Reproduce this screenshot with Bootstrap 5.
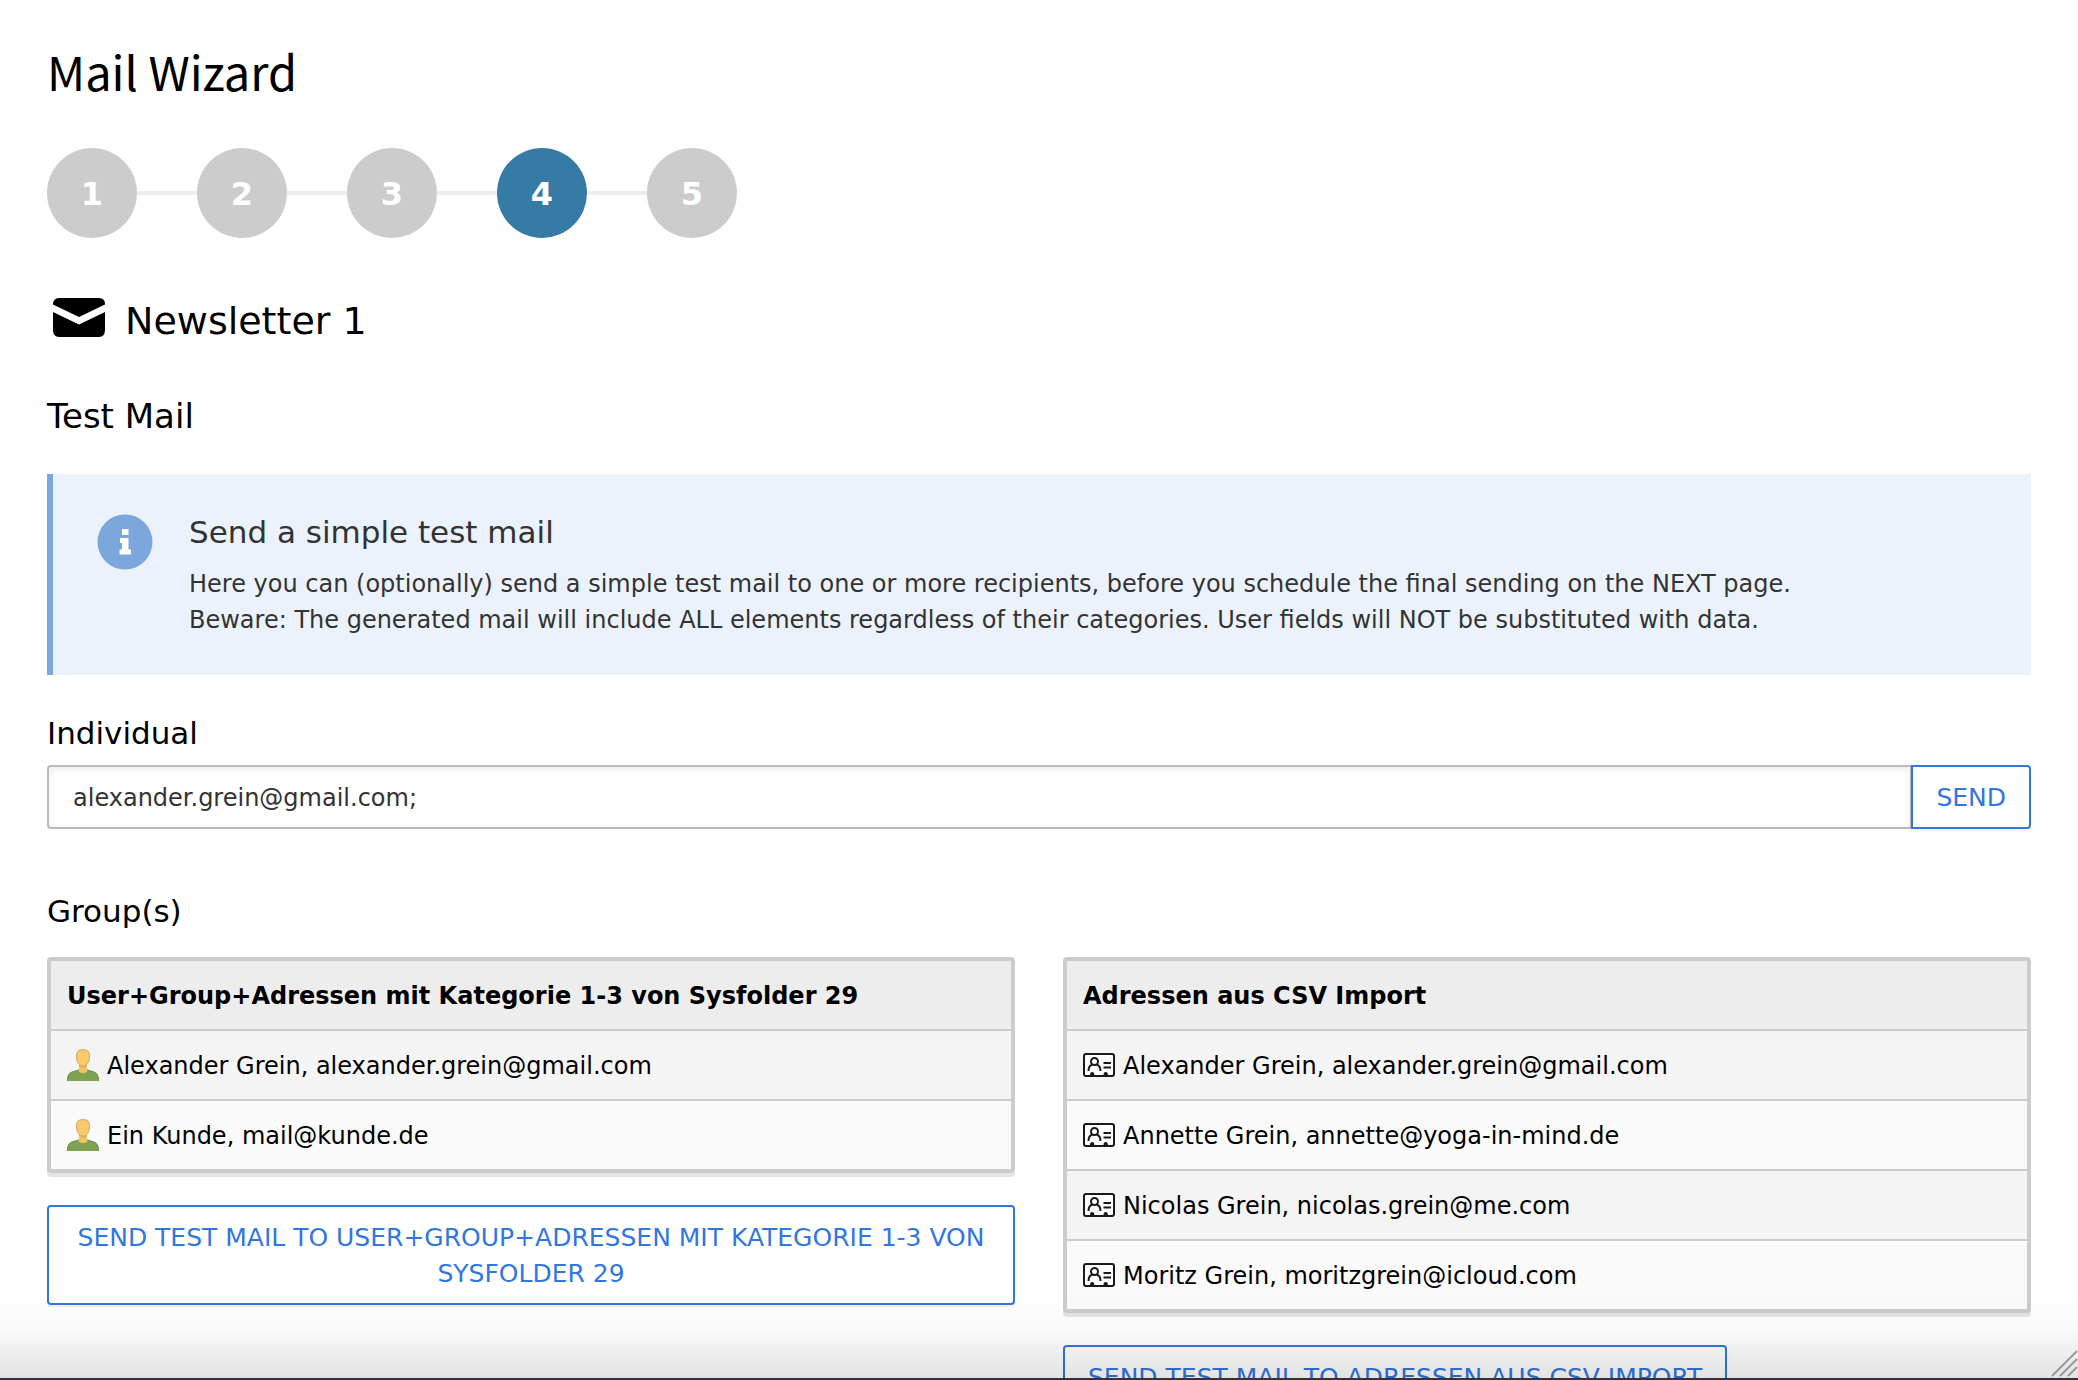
<!DOCTYPE html>
<html lang="en">
<head>
<meta charset="utf-8">
<meta name="viewport" content="width=device-width, initial-scale=1">
<title>Mail Wizard</title>
<link href="https://cdn.jsdelivr.net/npm/bootstrap@5.3.0/dist/css/bootstrap.min.css" rel="stylesheet">
<style>
  body { font-family: Verdana, "DejaVu Sans", sans-serif; font-size: 24px; line-height: 36px; color: #000; background: #fff; }
  .module { padding: 37px 47px 0; }
  h1 { font-family: "Source Sans Pro", "Noto Sans CJK SC", sans-serif; font-size: 47px; line-height: 68px; font-weight: 400; margin-bottom: 43px; }
  h2 { font-size: 38px; line-height: 52px; font-weight: 400; }
  h3 { font-size: 34px; line-height: 40px; font-weight: 400; margin: 40px 0 38px; }
  h4, .field-label { font-size: 31px; line-height: 36px; font-weight: 400; }
  .field-label { margin-bottom: 14px; }
  .step { width: 90px; height: 90px; padding-top: 2px; font-size: 32px; font-weight: 700; background: #ccc; color: #fff; }
  .step.current { background: #367ba6; }
  .step-line { width: 60px; height: 4px; background: #eee; }
  .callout { gap: 36px; border-left: 6px solid #7ba7dd; background: #ebf2fb; color: #333; padding: 40px 44px 37px; }
  .callout-title { margin-bottom: 16px; }
  .groups-title { margin: 64px 0 28px; }
  .mail-field { height: 64px; padding: 2px 24px 0; font-size: 24px; color: #333; background: #fefefe; border: 2px solid #bbb; border-radius: 4px; box-shadow: inset 0 2px 6px rgba(0,0,0,.08); }
  .btn-send { --bs-btn-font-size: 25px; --bs-btn-line-height: 36px; --bs-btn-color: #3276df; --bs-btn-border-color: #3276df; --bs-btn-border-width: 2px; --bs-btn-border-radius: 4px; --bs-btn-bg: #fff; padding: 13px 23px 11px; text-transform: uppercase; box-shadow: 0 2px 2px rgba(0,0,0,.05); }
  .btn-group-send { margin-top: 32px; }
  .panel-table { border: 4px solid #ccc; border-radius: 4px; box-shadow: 0 4px 0 #e4e4e4; }
  .panel-table table { line-height: 36px; }
  .panel-table th, .panel-table td { padding: 17px 16px 15px; color: #000; }
  .panel-table th { background: #ededed; }
  .panel-table td { background: #f4f4f4; border-top: 2px solid #ccc; }
  .panel-table tr:nth-child(even) td { background: #fafafa; }
  .panel-table td svg { margin-right: 8px; }
  .ico-person { vertical-align: -7px; }
  .ico-card { vertical-align: -3px; }
  .fade-bottom { height: 86px; background: linear-gradient(rgba(0,0,0,0), rgba(0,0,0,.02) 40%, rgba(0,0,0,.11)); border-bottom: 2px solid #333236; pointer-events: none; }
</style>
</head>
<body class="vh-100 overflow-hidden">
<svg class="d-none">
  <symbol id="person" viewBox="0 0 32 32">
    <path fill="#7fa152" d="M0 32c0-6 2-9 7-10l5-1.500h8l5 1.500c5 1 7 4 7 10z"/>
    <path fill="none" stroke="#6f934a" d="M.6 32c0-6 2-8.600 6.400-9.500l5-1.500M31.400 32c0-6-2-8.600-6.400-9.500L20 21"/>
    <path fill="#f2c363" d="M12.500 14l-1 8.500q4.500 3.500 9 0l-1-8.500z"/>
    <path fill="#dfb058" d="M12.300 15.500q3.700 4 7.400 0l.2 1.500q-3.900 3-7.800 0z"/>
    <path fill="#f7ca6b" stroke="#d2a95a" d="M16 .6c4.500 0 6.500 2 6.500 6.400 0 6-2.500 10-6.500 10S9.500 13 9.500 7C9.500 2.600 11.500.6 16 .6z"/>
  </symbol>
  <symbol id="idcard" viewBox="0 0 32 24">
    <rect x="1" y="1" width="30" height="22" rx="2" fill="#fff" stroke="#1a1a1a" stroke-width="2"/>
    <g fill="none" stroke="#1a1a1a" stroke-width="2"><circle cx="11.500" cy="8.500" r="3.500"/><path d="M5.500 18c0-4 2-6 4-6.500M17.500 18c0-4-2-6-4-6.500M20.500 10H28M20.500 14.500H28"/></g>
    <path fill="#1a1a1a" d="M7 22q0-3 2.200-3t2.200 3zM20.500 22q0-3 2.200-3t2.200 3z"/>
  </symbol>
</svg>
<main class="module h-100 overflow-hidden">
  <h1>Mail Wizard</h1>
  <div class="d-flex align-items-center">
    <div class="step rounded-circle d-flex align-items-center justify-content-center">1</div><div class="step-line"></div>
    <div class="step rounded-circle d-flex align-items-center justify-content-center">2</div><div class="step-line"></div>
    <div class="step rounded-circle d-flex align-items-center justify-content-center">3</div><div class="step-line"></div>
    <div class="step current rounded-circle d-flex align-items-center justify-content-center" aria-current="step">4</div><div class="step-line"></div>
    <div class="step rounded-circle d-flex align-items-center justify-content-center">5</div>
  </div>

  <div class="d-flex align-items-center mt-5 pt-1 pb-1">
    <svg class="me-3" width="62" height="62" viewBox="0 4 62 62" aria-hidden="true">
      <path d="M12 12h40q6 0 6 6.500L32 31 6 18.500q0-6.500 6-6.500z"/><path d="M6 26l26 12.500L58 26v18q0 7-6 7H12q-6 0-6-7z"/>
    </svg>
    <h2 class="mb-0">Newsletter 1</h2>
  </div>
  <h3>Test Mail</h3>

  <div class="callout d-flex">
    <svg class="flex-shrink-0" width="56" height="56" viewBox="0 0 56 56" aria-hidden="true">
      <circle cx="28" cy="28" r="27.500" fill="#7ba7dd"/><path fill="#fff" d="M25 15h6.500v6H25zM23 24h8.500v11.500H34v5H22.500v-5H25V29h-2z"/>
    </svg>
    <div>
      <h4 class="callout-title">Send a simple test mail</h4>
      <p class="mb-0">Here you can (optionally) send a simple test mail to one or more recipients, before you schedule the final sending on the NEXT page.<br>Beware: The generated mail will include ALL elements regardless of their categories. User fields will NOT be substituted with data.</p>
    </div>
  </div>

  <form class="mt-4 pt-3">
    <label class="field-label d-block" for="mail">Individual</label>
    <div class="input-group">
      <input type="text" class="form-control mail-field" id="mail" value="alexander.grein@gmail.com;">
      <button type="button" class="btn btn-send">Send</button>
    </div>
  </form>

  <h4 class="groups-title">Group(s)</h4>
  <div class="row gx-5">
    <div class="col-6">
      <div class="panel-table">
        <table class="w-100">
          <thead><tr><th scope="col">User+Group+Adressen mit Kategorie 1-3 von Sysfolder 29</th></tr></thead>
          <tbody>
            <tr><td><svg class="ico-person" width="32" height="32"><use href="#person"/></svg>Alexander Grein, alexander.grein@gmail.com</td></tr>
            <tr><td><svg class="ico-person" width="32" height="32"><use href="#person"/></svg>Ein Kunde, mail@kunde.de</td></tr>
          </tbody>
        </table>
      </div>
      <button type="button" class="btn btn-send btn-group-send d-block">Send test mail to User+Group+Adressen mit Kategorie 1-3 von Sysfolder 29</button>
    </div>
    <div class="col-6">
      <div class="panel-table">
        <table class="w-100">
          <thead><tr><th scope="col">Adressen aus CSV Import</th></tr></thead>
          <tbody>
            <tr><td><svg class="ico-card" width="32" height="24"><use href="#idcard"/></svg>Alexander Grein, alexander.grein@gmail.com</td></tr>
            <tr><td><svg class="ico-card" width="32" height="24"><use href="#idcard"/></svg>Annette Grein, annette@yoga-in-mind.de</td></tr>
            <tr><td><svg class="ico-card" width="32" height="24"><use href="#idcard"/></svg>Nicolas Grein, nicolas.grein@me.com</td></tr>
            <tr><td><svg class="ico-card" width="32" height="24"><use href="#idcard"/></svg>Moritz Grein, moritzgrein@icloud.com</td></tr>
          </tbody>
        </table>
      </div>
      <button type="button" class="btn btn-send btn-group-send d-block">Send test mail to Adressen aus CSV Import</button>
    </div>
  </div>
</main>
<div class="fade-bottom fixed-bottom d-flex justify-content-end align-items-end">
  <svg width="27" height="28" viewBox="0 0 27 28" fill="none" stroke="#999" stroke-width="2" aria-hidden="true"><path d="M1 26L26 1M9 26L26 9M17 26l9-9"/></svg>
</div>
<script src="https://cdn.jsdelivr.net/npm/bootstrap@5.3.0/dist/js/bootstrap.bundle.min.js"></script>
</body>
</html>
